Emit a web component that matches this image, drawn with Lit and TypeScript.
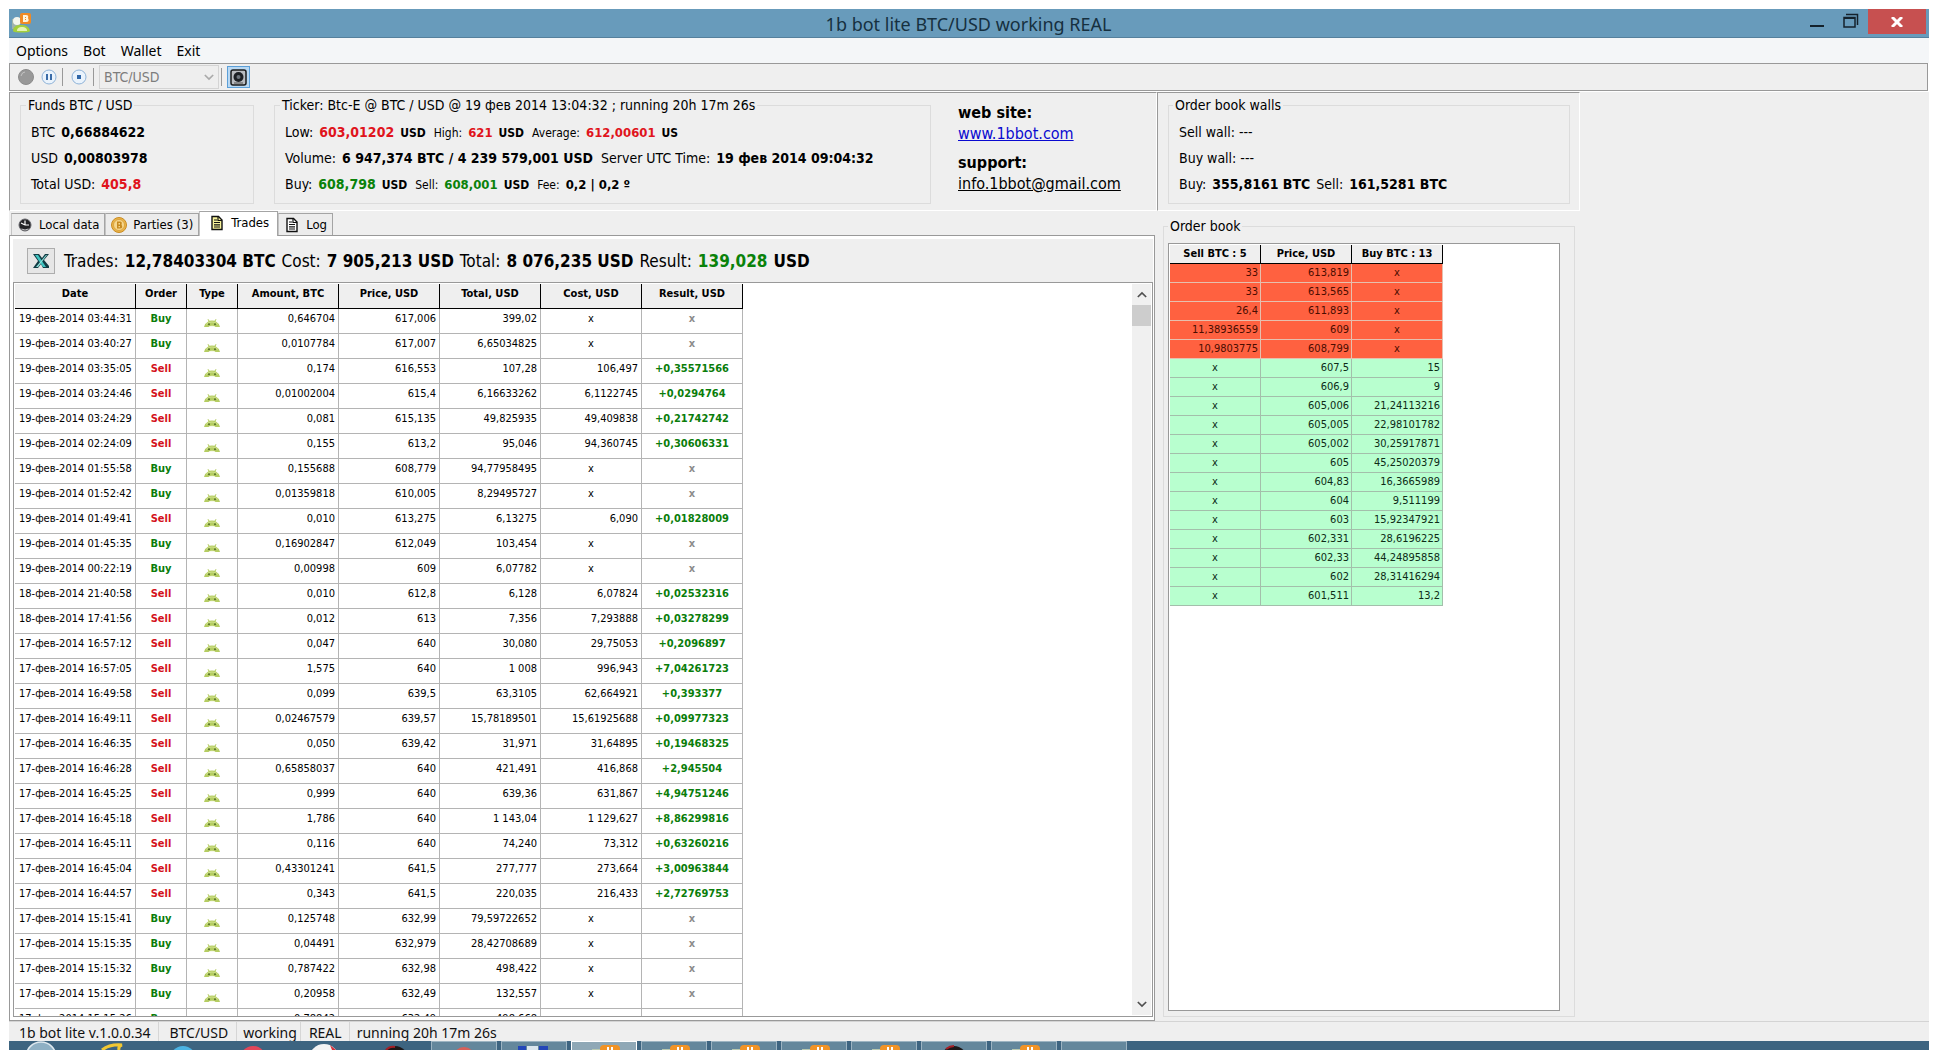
import { LitElement, html, css, svg, nothing } from "lit";
import { customElement } from "lit/decorators.js";
import { classMap } from "lit/directives/class-map.js";

type Trade = [date: string, side: "Buy" | "Sell", amount: string, price: string, total: string, cost: string, result: string];

const TRADES: Trade[] = [
  ["19-фев-2014 03:44:31", "Buy", "0,646704", "617,006", "399,02", "x", "x"],
  ["19-фев-2014 03:40:27", "Buy", "0,0107784", "617,007", "6,65034825", "x", "x"],
  ["19-фев-2014 03:35:05", "Sell", "0,174", "616,553", "107,28", "106,497", "+0,35571566"],
  ["19-фев-2014 03:24:46", "Sell", "0,01002004", "615,4", "6,16633262", "6,1122745", "+0,0294764"],
  ["19-фев-2014 03:24:29", "Sell", "0,081", "615,135", "49,825935", "49,409838", "+0,21742742"],
  ["19-фев-2014 02:24:09", "Sell", "0,155", "613,2", "95,046", "94,360745", "+0,30606331"],
  ["19-фев-2014 01:55:58", "Buy", "0,155688", "608,779", "94,77958495", "x", "x"],
  ["19-фев-2014 01:52:42", "Buy", "0,01359818", "610,005", "8,29495727", "x", "x"],
  ["19-фев-2014 01:49:41", "Sell", "0,010", "613,275", "6,13275", "6,090", "+0,01828009"],
  ["19-фев-2014 01:45:35", "Buy", "0,16902847", "612,049", "103,454", "x", "x"],
  ["19-фев-2014 00:22:19", "Buy", "0,00998", "609", "6,07782", "x", "x"],
  ["18-фев-2014 21:40:58", "Sell", "0,010", "612,8", "6,128", "6,07824", "+0,02532316"],
  ["18-фев-2014 17:41:56", "Sell", "0,012", "613", "7,356", "7,293888", "+0,03278299"],
  ["17-фев-2014 16:57:12", "Sell", "0,047", "640", "30,080", "29,75053", "+0,2096897"],
  ["17-фев-2014 16:57:05", "Sell", "1,575", "640", "1 008", "996,943", "+7,04261723"],
  ["17-фев-2014 16:49:58", "Sell", "0,099", "639,5", "63,3105", "62,664921", "+0,393377"],
  ["17-фев-2014 16:49:11", "Sell", "0,02467579", "639,57", "15,78189501", "15,61925688", "+0,09977323"],
  ["17-фев-2014 16:46:35", "Sell", "0,050", "639,42", "31,971", "31,64895", "+0,19468325"],
  ["17-фев-2014 16:46:28", "Sell", "0,65858037", "640", "421,491", "416,868", "+2,945504"],
  ["17-фев-2014 16:45:25", "Sell", "0,999", "640", "639,36", "631,867", "+4,94751246"],
  ["17-фев-2014 16:45:18", "Sell", "1,786", "640", "1 143,04", "1 129,627", "+8,86299816"],
  ["17-фев-2014 16:45:11", "Sell", "0,116", "640", "74,240", "73,312", "+0,63260216"],
  ["17-фев-2014 16:45:04", "Sell", "0,43301241", "641,5", "277,777", "273,664", "+3,00963844"],
  ["17-фев-2014 16:44:57", "Sell", "0,343", "641,5", "220,035", "216,433", "+2,72769753"],
  ["17-фев-2014 15:15:41", "Buy", "0,125748", "632,99", "79,59722652", "x", "x"],
  ["17-фев-2014 15:15:35", "Buy", "0,04491", "632,979", "28,42708689", "x", "x"],
  ["17-фев-2014 15:15:32", "Buy", "0,787422", "632,98", "498,422", "x", "x"],
  ["17-фев-2014 15:15:29", "Buy", "0,20958", "632,49", "132,557", "x", "x"],
  ["17-фев-2014 15:15:26", "Buy", "0,78842", "632,49", "498,668", "x", "x"],
];

const BOOK: [sell: string, price: string, buy: string][] = [
  ["33", "613,819", "x"],
  ["33", "613,565", "x"],
  ["26,4", "611,893", "x"],
  ["11,38936559", "609", "x"],
  ["10,9803775", "608,799", "x"],
  ["x", "607,5", "15"],
  ["x", "606,9", "9"],
  ["x", "605,006", "21,24113216"],
  ["x", "605,005", "22,98101782"],
  ["x", "605,002", "30,25917871"],
  ["x", "605", "45,25020379"],
  ["x", "604,83", "16,3665989"],
  ["x", "604", "9,511199"],
  ["x", "603", "15,92347921"],
  ["x", "602,331", "28,6196225"],
  ["x", "602,33", "44,24895858"],
  ["x", "602", "28,31416294"],
  ["x", "601,511", "13,2"],
];

const appIcon = html`<svg class="app-icon" viewBox="0 0 20 20" aria-hidden="true">
  <path d="M1 6h8v10H1z" fill="#9fb3ac" />
  <path d="M2 18c0-5 4-6 8-6s8 1 9 6c0 2-17 2-17 0z" fill="#a3cf3c" />
  <path d="M6 18c0-3 2-4 5-4s5 1 5 4z" fill="#e4f3b4" />
  <circle cx="6" cy="8" r="4" fill="#f4f6ee" />
  <rect x="9" y="0" width="11" height="11" rx="2" fill="#f08a24" />
  <path d="M12 2h3q3 0 2 3q2 4-2 4h-3zM14 4v1h1V4zM14 6v1h1V6z" fill="#fff3dc" fill-rule="evenodd" />
</svg>`;

const android = html`<svg class="droid" viewBox="0 0 16 8" role="img" aria-label="Bot">
  <path d="M0 8Q1 4 4.500 2.200L3.500.300L4.200 0L5.500 1.800Q8 1.200 10.500 1.800L11.800 0l.7.300L11.500 2.200Q15 4 16 8z" fill="#b5cd62" />
  <path d="M4.500 8Q5 6.800 8 6.800T11.500 8z" fill="#f6f9e8" />
  <path d="M2 5.500Q4 3 8 3T14 5.500" fill="none" stroke="#cfe08c" />
  <circle cx="5" cy="5.300" r="1" fill="#55702a" /><circle cx="11" cy="5.300" r="1" fill="#55702a" />
</svg>`;

const page = (fill: string) => html`<svg class="tab-icon" viewBox="0 0 16 16" aria-hidden="true">
  <path d="M3 1.500h6.500L13 5v9.500H3z" fill=${fill} stroke="#111" stroke-width="1.400" />
  <path d="M9 1.500V5.500h4M5 5h3M5 7.500h6M5 9.800h6M5 12h6" fill="none" stroke="#111" stroke-width="1.200" />
</svg>`;

const clock = html`<svg class="tab-icon" viewBox="0 0 16 16" aria-hidden="true">
  <circle cx="8" cy="8" r="6" fill="#232326" stroke="#66666b" />
  <path d="M8 8V3.500M8 8L4 6M8 8h4" stroke="#fff" stroke-width="1.200" fill="none" />
  <path d="M4.500 12Q8 14 11.500 12" stroke="#c9c9cc" fill="none" />
</svg>`;

const coin = html`<svg class="tab-icon" viewBox="0 0 16 16" aria-hidden="true">
  <circle cx="8" cy="8" r="7.500" fill="#eab54a" stroke="#c98b22" />
  <circle cx="8" cy="8" r="5.500" fill="#f6d78e" stroke="#d79b33" stroke-width=".8" />
  <path d="M6 4.500h3q2.500 0 1.500 3q2 4-1.500 4H6zM7.500 6v1.500h1.500V6zM7.500 9v1.300h1.500V9z" fill="#c78a20" fill-rule="evenodd" />
</svg>`;

const chevron = (cls: string, d: string) => html`<svg class=${cls} viewBox="0 0 12 8" aria-hidden="true">
  <path d=${d} fill="none" stroke="currentColor" stroke-width="2" />
</svg>`;

/** Top edges of the icons shown on the taskbar. */
const PINNED = [
  svg`<circle cx="14" cy="16" r="15" fill="#8fb0c4" stroke="#dfe9ef" stroke-width="1.500"/>`,
  svg`<path d="M4 9Q12 3 24 4Q20 5 21 9" fill="none" stroke="#f2c832" stroke-width="3"/>`,
  svg`<circle cx="14" cy="18" r="13" fill="#4bb3e3"/>`,
  svg`<circle cx="14" cy="18" r="13" fill="#e2475a"/>`,
  svg`<circle cx="14" cy="18" r="15" fill="#f3f3f3"/><path d="M20 4l6 5h-4z" fill="#d5303a"/>`,
  svg`<circle cx="14" cy="18" r="13" fill="#1c1718"/><path d="M5 9q4-4 9-3" stroke="#a51e25" stroke-width="2" fill="none"/>`,
];

const BOT = svg`<path d="M4 8h9v1H4z" fill="#b9c9b0"/><rect x="12" y="4" width="20" height="12" rx="4" fill="#f29325"/><path d="M20 6v3M24 6v3" stroke="#fff" stroke-width="2"/>`;
const RUNNING = [
  svg`<circle cx="16" cy="17" r="11" fill="#d7605a"/>`,
  svg`<path d="M0 5h8v5H0zM21 5h9v5h-9z" fill="#2346b8"/><path d="M9 5h11v5H9z" fill="#dbe6ee"/>`,
  BOT, BOT, BOT, BOT, BOT,
  svg`<circle cx="16" cy="18" r="13" fill="#1c1718"/><path d="M8 8q4-3 8-3" stroke="#a51e25" stroke-width="2" fill="none"/>`,
  BOT,
  nothing,
];

const base = css`
  * { box-sizing: border-box; }
  button, select { font: inherit; color: inherit; margin: 0; }
  button { padding: 0; border: 0; background: none; }
  svg { display: block; flex: none; }
`;

@customElement("trades-table")
class TradesTable extends LitElement {
  static styles = [base, css`
    :host { display: block; }
    .grid { table-layout: fixed; width: 728px; border-collapse: separate; border-spacing: 0; font-size: 11px; line-height: 14px; }
    .date { width: 121px; }
    .narrow { width: 51px; }
    th { height: 25px; padding: 2px 0 0; vertical-align: top; line-height: 15px; background: #efefef; border-right: 1px solid #000; border-bottom: 1px solid #000; }
    td { height: 25px; padding: 3px 3px 0; vertical-align: top; text-align: right; border-right: 1px solid #b4b4b4; border-bottom: 1px solid #b4b4b4; white-space: nowrap; }
    .stamp { text-align: left; padding-left: 4px; padding-right: 0; }
    .mid { text-align: center; }
    .strong { text-align: center; font-weight: bold; }
    .buy, .gain { color: #0a7d0a; }
    .sell { color: #d4121c; }
    .none { color: #8c8c8c; }
    .droid { width: 16px; height: 8px; margin: 7px auto 0; }
  `];
  render() {
    return html`<table class="grid">
      <thead><tr>
        <th class="date">Date</th><th class="narrow">Order</th><th class="narrow">Type</th>
        <th>Amount, BTC</th><th>Price, USD</th><th>Total, USD</th><th>Cost, USD</th><th>Result, USD</th>
      </tr></thead>
      <tbody>${TRADES.map(([date, side, amount, price, total, cost, result]) => html`<tr>
        <td class="stamp">${date}</td>
        <td class=${classMap({ strong: true, buy: side === "Buy", sell: side === "Sell" })}>${side}</td>
        <td>${android}</td>
        <td>${amount}</td><td>${price}</td><td>${total}</td>
        <td class=${classMap({ mid: cost === "x" })}>${cost}</td>
        <td class=${classMap({ strong: true, none: result === "x", gain: result !== "x" })}>${result}</td>
      </tr>`)}</tbody>
    </table>`;
  }
}

@customElement("order-book")
class OrderBook extends LitElement {
  static styles = [base, css`
    :host { display: block; }
    .grid { table-layout: fixed; width: 273px; border-collapse: separate; border-spacing: 0; font-size: 11px; line-height: 14px; }
    th, td { height: 19px; padding: 0 2px; }
    th { background: #efefef; border-right: 1px solid #000; border-bottom: 1px solid #000; }
    td { text-align: right; }
    .ask td { background: #ff6140; color: #4a0d00; border-right: 1px solid #e6bfae; border-bottom: 1px solid #e6bfae; }
    .bid td { background: #b8ffcf; color: #0d2b16; border-right: 1px solid #a3bfab; border-bottom: 1px solid #a3bfab; }
    td.mid { text-align: center; }
  `];
  render() {
    return html`<table class="grid">
      <thead><tr><th>Sell BTC : 5</th><th>Price, USD</th><th>Buy BTC : 13</th></tr></thead>
      <tbody>${BOOK.map(([sell, price, buy]) => html`<tr class=${buy === "x" ? "ask" : "bid"}>
        <td class=${classMap({ mid: sell === "x" })}>${sell}</td><td>${price}</td>
        <td class=${classMap({ mid: buy === "x" })}>${buy}</td>
      </tr>`)}</tbody>
    </table>`;
  }
}

@customElement("app-root")
class AppRoot extends LitElement {
  static styles = [base, css`
    :host {
      display: flex; flex-direction: column; height: 100vh; padding: 9px 9px 0; overflow: hidden; box-sizing: border-box;
      background: #fff; color: #000; font: 14px/18px "DejaVu Sans Condensed", "DejaVu Sans", sans-serif; white-space: nowrap;
    }
    .titlebar { display: flex; align-items: flex-start; height: 29px; flex: none; background: #689bbb; border-bottom: 1px solid #55809c; padding: 0 3px 0 2px; color: #16303f; }
    .app-icon { width: 20px; height: 20px; margin-top: 4px; }
    .side { flex: 1; display: flex; justify-content: flex-end; }
    .side.start { justify-content: flex-start; }
    .title { margin: 0; font: 18px/30px "Noto Sans", "Open Sans", sans-serif; }
    .win { width: 34px; height: 24px; display: flex; justify-content: center; align-items: center; }
    .win.close { width: 58px; height: 25px; background: #c75050; }
    .menu { display: flex; gap: 15px; height: 25px; flex: none; padding: 0 7px; background: #f4f6f8; font: 14px/26px "Noto Sans", "Open Sans", sans-serif; }
    .toolbar { display: flex; align-items: center; height: 28px; flex: none; margin-right: 1px; padding: 0 8px; background: #efefef; border: 1px solid #999; }
    .tool { width: 16px; height: 16px; }
    .tool + .tool { margin-left: 7px; }
    .sep { width: 1px; height: 18px; background: #999; margin: 0 8px 0 5px; }
    .sep.wide { margin: 0 5px 0 6px; }
    .sep.near { margin: 0 5px 0 2px; }
    .pair { position: relative; width: 120px; height: 24px; color: #7d7d7d; }
    .pair select { appearance: none; width: 100%; height: 100%; padding: 0 4px; border: 1px solid #d4d4d4; background: #eee; color: #7d7d7d; opacity: 1; }
    .drop { position: absolute; right: 5px; top: 9px; width: 10px; height: 7px; color: #aaa; }
    .safe { width: 23px; height: 22px; display: grid; place-items: center; border: 1px solid #5b9fd8; background: #b9d8f2; }
    .main { flex: 1; min-height: 0; display: grid; grid-template-columns: 1148fr 423fr 349fr; grid-template-rows: 119px minmax(0, 1fr); background: #efefef; border-top: 1px solid #fff; }
    .panel { display: flex; border: 1px solid #999; border-right-color: #fff; border-bottom-color: #fff; padding: 3px 9px 6px 10px; }
    .group { border: 1px solid #dcdcdc; margin: 0; padding: 5px 10px 0; min-width: 0; }
    .group legend { padding: 0 2px; margin-left: -5px; line-height: 18px; }
    .funds { width: 234px; margin-right: 20px; }
    .ticker { width: 657px; }
    .walls { flex: 1; }
    .walls legend { margin-left: -6px; }
    .book legend { margin-left: 0; }
    .line { display: flex; align-items: baseline; gap: 6px; height: 26px; line-height: 26px; }
    .line .next { margin-left: 2px; }
    .small { font-size: 12px; }
    .value { font-size: 13px; }
    .red { color: #e0141c; }
    .green { color: #0a820a; }
    .contact { margin: 0 0 0 27px; padding-top: 6px; font-size: 16px; font-style: normal; line-height: 21px; display: flex; flex-direction: column; }
    .contact .gap { margin-top: 8px; }
    .contact a { color: #000; }
    .contact a.web { color: #0a0ad0; }
    .left { display: flex; flex-direction: column; min-height: 0; min-width: 0; padding-right: 2px; }
    .tabs { display: flex; align-items: flex-end; height: 24px; padding-left: 2px; flex: none; font-size: 13px; }
    .tab { display: flex; align-items: center; gap: 6px; height: 22px; padding: 0 5px; border: 1px solid #a4a4a4; border-bottom: 0; border-left-color: #c4c4c4; background: #ececec; }
    .tab.on { height: 25px; margin-bottom: -1px; padding: 0 8px 2px 9px; background: #fff; position: relative; }
    .tab-icon { width: 16px; height: 16px; }
    .sheet { flex: 1; min-height: 0; display: flex; flex-direction: column; background: #fff; border: 1px solid #999; padding: 3px 1px 3px 3px; }
    .summary { display: flex; align-items: center; gap: 6px; flex: none; height: 43px; padding-left: 14px; background: #efefef; font-size: 17px; line-height: 24px; }
    .excel { width: 28px; height: 26px; margin-right: 3px; display: grid; place-items: center; border: 1px solid #adadad; background: #e6e6e6; }
    .list { flex: 1; min-height: 0; display: flex; justify-content: space-between; border: 1px solid #999; padding: 1px; overflow: hidden; }
    .scroll { display: flex; flex-direction: column; width: 19px; background: #f0f0f0; color: #505050; }
    .arrow { height: 21px; display: grid; place-items: center; }
    .arrow svg { width: 10px; height: 7px; }
    .thumb { height: 21px; background: #cdcdcd; }
    .track { flex: 1; }
    .right { display: flex; min-height: 0; padding: 6px 5px 4px 6px; }
    .book { flex: 1; display: flex; flex-direction: column; padding: 8px 14px 5px 4px; }
    .frame { border: 1px solid #999; background: #fff; padding: 1px; height: 100%; overflow: hidden; }
    .status { display: flex; flex: none; height: 20px; border-top: 1px solid #d4d4d4; background: #efefef; font: 14px/21px "Noto Sans", "Open Sans", sans-serif; color: #111; }
    .status span { padding: 0 8px 0 10px; border-right: 1px solid #d6d6d6; }
    .status .tight { padding: 0 3px 0 6px; }
    .status .snug { padding: 0 7px 0 8px; }
    .status .last { border: 0; padding-left: 7px; }
    .taskbar { display: flex; gap: 4px; flex: none; height: 9px; background: #3d6480; overflow: hidden; }
    .pins { display: flex; flex: none; justify-content: space-between; width: 418px; padding: 0 14px 0 18px; }
    .pins svg, .task svg { width: 32px; height: 9px; }
    .task { width: 66px; flex: none; padding-left: 16px; border: 1px solid #9db4c2; border-bottom: 0; background: #64879c; }
    .task.active { background: #8fa8b6; border-color: #fff; }
    .task svg { margin-top: -1px; }
  `];

  render() {
    return html`
      <header class="titlebar">
        <div class="side start">${appIcon}</div>
        <h1 class="title">1b bot lite BTC/USD working REAL</h1>
        <div class="side">
          <button class="win" aria-label="Minimize"><svg width="14" height="16"><path d="M0 12h14v2H0z" fill="#14222c" /></svg></button>
          <button class="win" aria-label="Restore"><svg width="16" height="16" viewBox="0 0 16 16"><path d="M3 1.500h11.500V12M1 4.500h11V14H1z" fill="none" stroke="#14222c" stroke-width="1.500" /><path d="M1 4h11v2H1z" fill="#14222c" /></svg></button>
          <button class="win close" aria-label="Close"><svg width="12" height="10" viewBox="0 0 12 10"><path d="M1 0l10 10M11 0L1 10" stroke="#fff" stroke-width="3" /></svg></button>
        </div>
      </header>
      <nav class="menu">${["Options", "Bot", "Wallet", "Exit"].map((m) => html`<button>${m}</button>`)}</nav>
      <div class="toolbar">
        <button class="tool" aria-label="Start"><svg width="16" height="16" viewBox="0 0 16 16"><circle cx="8" cy="8" r="7.500" fill="#989898" stroke="#8c8c8c" /><path d="M3 7Q4 3 7 3" fill="none" stroke="#c4c4c4" /></svg></button>
        <button class="tool" aria-label="Pause"><svg width="16" height="16" viewBox="0 0 16 16"><circle cx="8" cy="8" r="7" fill="#eaf3fc" stroke="#8fb3d8" /><path d="M6 5v6M10 5v6" stroke="#3a6ca8" stroke-width="2" /></svg></button>
        <span class="sep"></span>
        <button class="tool" aria-label="Stop"><svg width="16" height="16" viewBox="0 0 16 16"><circle cx="8" cy="8" r="7" fill="#eaf3fc" stroke="#8fb3d8" /><rect x="6" y="6" width="4" height="4" fill="#2f66a8" /></svg></button>
        <span class="sep wide"></span>
        <label class="pair"><select disabled aria-label="Pair"><option>BTC/USD</option></select>${chevron("drop", "M1 1l5 5l5-5")}</label>
        <span class="sep near"></span>
        <button class="safe" aria-label="Safe"><svg width="17" height="17" viewBox="0 0 17 17"><rect x="1" y="1" width="15" height="15" rx="2" fill="#b9bcc0" stroke="#1b1b1b" stroke-width="1.500" /><circle cx="8.500" cy="8" r="5" fill="#1d2024" /><circle cx="8.500" cy="8" r="2" fill="#6d747c" /><path d="M4 14h9" stroke="#555" /></svg></button>
      </div>
      <main class="main">
        <section class="panel">
          <fieldset class="group funds">
            <legend>Funds BTC / USD</legend>
            <div class="line">BTC <b>0,66884622</b></div>
            <div class="line">USD <b>0,00803978</b></div>
            <div class="line">Total USD: <b class="red">405,8</b></div>
          </fieldset>
          <fieldset class="group ticker">
            <legend>Ticker: Btc-E @ BTC / USD @ 19 фев 2014 13:04:32 ; running 20h 17m 26s</legend>
            <div class="line">Low: <b class="red">603,01202</b><b class="small">USD</b>
              <span class="small next">High:</span><b class="value red">621</b><b class="small">USD</b>
              <span class="small next">Average:</span><b class="value red">612,00601</b><b class="small">US</b></div>
            <div class="line">Volume: <b>6 947,374 BTC / 4 239 579,001 USD</b><span class="next">Server UTC Time:</span><b>19 фев 2014 09:04:32</b></div>
            <div class="line">Buy: <b class="green">608,798</b><b class="small">USD</b>
              <span class="small next">Sell:</span><b class="value green">608,001</b><b class="small">USD</b>
              <span class="small next">Fee:</span><b class="value">0,2 | 0,2 º</b></div>
          </fieldset>
          <address class="contact">
            <b>web site:</b><a class="web" href="#web">www.1bbot.com</a>
            <b class="gap">support:</b><a href="#mail">info.1bbot@gmail.com</a>
          </address>
        </section>
        <section class="panel">
          <fieldset class="group walls">
            <legend>Order book walls</legend>
            <div class="line">Sell wall: ---</div>
            <div class="line">Buy wall: ---</div>
            <div class="line">Buy: <b>355,8161 BTC</b><span>Sell:</span><b>161,5281 BTC</b></div>
          </fieldset>
        </section>
        <div></div>
        <section class="left">
          <div class="tabs" role="tablist">
            <button class="tab" role="tab">${clock}Local data</button>
            <button class="tab" role="tab">${coin}Parties (3)</button>
            <button class="tab on" role="tab" aria-selected="true">${page("#f6f29a")}Trades</button>
            <button class="tab" role="tab">${page("#fff")}Log</button>
          </div>
          <div class="sheet">
            <div class="summary">
              <button class="excel" aria-label="Export to Excel"><svg width="18" height="16" viewBox="0 0 18 16"><path d="M1 1h6l3 4l3-4h4l-5 6l5 6v2H11l-2-4l-3 4H1l5-7z" fill="#123c44" /><path d="M3 2h3l8 12h-3z" fill="#3fc3c0" /><path d="M14 2h1L6 14H4z" fill="#8fe3dc" /></svg></button>
              <span>Trades:</span><b>12,78403304 BTC</b><span>Cost:</span><b>7 905,213 USD</b>
              <span>Total:</span><b>8 076,235 USD</b><span>Result:</span><b class="green">139,028</b><b>USD</b>
            </div>
            <div class="list">
              <trades-table></trades-table>
              <div class="scroll">
                <button class="arrow" aria-label="Scroll up">${chevron("up", "M1 7l5-5l5 5")}</button>
                <div class="thumb"></div><div class="track"></div>
                <button class="arrow" aria-label="Scroll down">${chevron("down", "M1 1l5 5l5-5")}</button>
              </div>
            </div>
          </div>
        </section>
        <section class="right">
          <fieldset class="group book">
            <legend>Order book</legend>
            <div class="frame"><order-book></order-book></div>
          </fieldset>
        </section>
      </main>
      <footer class="status"><span>1b bot lite v.1.0.0.34</span><span>BTC/USD</span><span class="tight">working</span><span class="snug">REAL</span><span class="last">running 20h 17m 26s</span></footer>
      <div class="taskbar" aria-hidden="true">
        <div class="pins">${PINNED.map((p) => html`<svg viewBox="0 0 32 9">${p}</svg>`)}</div>
        ${RUNNING.map((icon, i) => html`<div class=${classMap({ task: true, active: i === 2 })}><svg viewBox="0 0 32 9">${icon}</svg></div>`)}
      </div>`;
  }
}
